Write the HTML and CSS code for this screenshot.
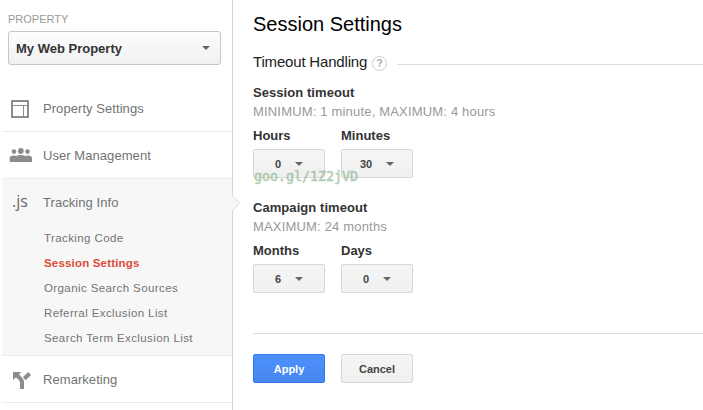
FILE: index.html
```html
<!DOCTYPE html>
<html lang="en">
<head>
<meta charset="utf-8">
<title>Session Settings</title>
<link rel="stylesheet" href="styles.css">
</head>
<body>
<div class="app">
  <aside class="sidebar">
    <div class="property-label">PROPERTY</div>
    <button class="property-select"><span>My Web Property</span><i class="caret"></i></button>
    <nav class="nav">
      <a class="item">
        <svg class="icon" width="24" height="24" viewBox="0 0 24 24" fill="none" stroke="#8c8c8c"><path d="M4 4h16v16H4z" stroke-width="2"/><path d="M4 8.500h16M15.500 8v12" stroke-width="1"/></svg>
        <span>Property Settings</span>
      </a>
      <a class="item">
        <svg class="icon" width="24" height="24" viewBox="0 0 24 24" fill="#8c8c8c"><circle cx="6" cy="7.600" r="2.300"/><circle cx="12.800" cy="7" r="2.900"/><circle cx="19.500" cy="7.600" r="2.300"/><path d="M1.700 18v-3.800q0-2.700 4-2.700 1.500 0 2.500.4 1.800-1 4.500-1t4.500 1q1-.4 2.500-.4 4.300 0 4.300 2.700V18z"/></svg>
        <span>User Management</span>
      </a>
      <div class="group">
        <a class="item"><span class="icon js">.js</span><span>Tracking Info</span></a>
        <div class="sub">
          <a>Tracking Code</a>
          <a class="current">Session Settings</a>
          <a>Organic Search Sources</a>
          <a>Referral Exclusion List</a>
          <a>Search Term Exclusion List</a>
        </div>
        <svg class="pointer" width="9" height="16" viewBox="0 0 9 16"><path d="M0 0h1l7 8-7 8H0z" fill="#f7f7f7"/><path d="M.5.5l7 7.500-7 7.500" fill="none" stroke="#dcdcdc"/></svg>
      </div>
      <a class="item">
        <svg class="icon" width="24" height="24" viewBox="0 0 24 24"><path d="M5 4h8.500L11 6.300l2.700 2.900q2.300 2.300 2.300 5V21h-4v-6q0-1.600-1-2.800L8 9.200 5 12z" fill="#8c8c8c"/><path d="M16.300 10.700l5.300-5.200" stroke="#8c8c8c" stroke-width="4"/></svg>
        <span>Remarketing</span>
      </a>
    </nav>
  </aside>
  <main class="main">
    <h1>Session Settings</h1>
    <div class="section-head"><h2>Timeout Handling</h2><span class="help">?</span><hr></div>
    <section class="setting">
      <h3>Session timeout</h3>
      <p>MINIMUM: 1 minute, MAXIMUM: 4 hours</p>
      <div class="fields">
        <div class="field"><label>Hours</label><button class="btn"><span>0</span><i class="caret"></i></button></div>
        <div class="field"><label>Minutes</label><button class="btn"><span>30</span><i class="caret"></i></button></div>
      </div>
      <div class="watermark">goo.gl/1Z2jVD</div>
    </section>
    <section class="setting">
      <h3>Campaign timeout</h3>
      <p>MAXIMUM: 24 months</p>
      <div class="fields">
        <div class="field"><label>Months</label><button class="btn"><span>6</span><i class="caret"></i></button></div>
        <div class="field"><label>Days</label><button class="btn"><span>0</span><i class="caret"></i></button></div>
      </div>
    </section>
    <div class="actions"><button class="btn primary">Apply</button><button class="btn">Cancel</button></div>
  </main>
</div>
</body>
</html>
```
FILE: styles.css
```css
* { box-sizing: border-box; }
body { margin: 0; background: #fff; font: 13px/16px "Liberation Sans", Arial, sans-serif; color: #333; overflow: hidden; }
h1, h2, h3, p, hr { margin: 0; }
button { font-family: inherit; margin: 0; padding: 0; }
.app { display: flex; height: 410px; }
.sidebar { width: 233px; flex: none; border-right: 1px solid #d4d4d4; padding-top: 12px; }
.property-label { font-size: 11px; line-height: 14px; color: #999; padding-left: 8px; }
.property-select { display: flex; align-items: center; justify-content: space-between; width: 213px; height: 34px; margin: 5px 0 0 8px; padding: 0 10px 0 7px; border: 1px solid #c6c6c6; border-radius: 3px; background: linear-gradient(#fcfcfc, #f1f1f1); font-size: 13px; font-weight: bold; color: #333; }
.caret { width: 0; height: 0; border: 4px solid transparent; border-top-color: #666; border-bottom: 0; }
.nav { margin: 20px 0 0 2px; font-size: 13px; color: #737373; }
.item { display: flex; align-items: center; height: 47px; padding-top: 2px; border-bottom: 1px solid #ebebeb; letter-spacing: .06px; }
.icon { width: 24px; height: 24px; flex: none; margin: 0 11px 0 6px; }
.js { font: 16px/20px "Open Sans", sans-serif; letter-spacing: 0; color: #666; padding-left: 4px; }
.group { position: relative; height: 177px; background: #f7f7f7; border-bottom: 1px solid #ebebeb; }
.group .item { border: 0; padding-top: 0; }
.sub { display: flex; flex-direction: column; padding-left: 42px; font-size: 11.5px; line-height: 25px; letter-spacing: .4px; }
.current { color: #dd4b39; font-weight: bold; letter-spacing: .18px; }
.pointer { position: absolute; left: 230px; top: 16px; }
.main { flex: 1; padding: 12px 0 0 20px; }
h1 { font-size: 20px; line-height: 24px; font-weight: normal; color: #000; }
.section-head { display: flex; align-items: center; height: 20px; margin: 16px 0 13px; }
h2 { font-size: 15px; line-height: 20px; font-weight: normal; letter-spacing: -.18px; color: #222; }
.help { width: 15px; height: 15px; border: 1px solid #ccc; border-radius: 50%; margin: 2px 10px 0 5px; font-size: 10px; font-weight: bold; line-height: 13px; text-align: center; color: #aaa; }
.section-head hr { flex: 1; height: 1px; border: 0; background: #ddd; margin-top: 4px; }
.setting { position: relative; height: 115px; }
h3, label { display: block; font-size: 13px; font-weight: bold; line-height: 16px; color: #333; }
h3 { letter-spacing: .06px; }
.setting p { color: #999; line-height: 16px; margin-top: 3px; letter-spacing: .18px; }
.fields { display: flex; gap: 16px; margin-top: 8px; }
.field { width: 72px; }
.btn { display: flex; align-items: center; justify-content: center; gap: 14px; width: 72px; height: 29px; border: 1px solid #d8d8d8; border-radius: 2px; background: linear-gradient(#f5f5f5, #f0f0f0); font-size: 11px; font-weight: bold; color: #444; }
.field .btn { margin-top: 5px; }
.watermark { position: absolute; left: 1px; top: 84px; font: 13.3px/16px "DejaVu Sans Mono", monospace; -webkit-text-stroke: .5px #8fb98f; color: #8fb98f; opacity: .7; }
.actions { display: flex; gap: 16px; margin-top: 18px; padding-top: 20px; border-top: 1px solid #ddd; }
.primary { border-color: #3079ed; background: linear-gradient(#4d90fe, #4787ed); color: #fff; }
```
